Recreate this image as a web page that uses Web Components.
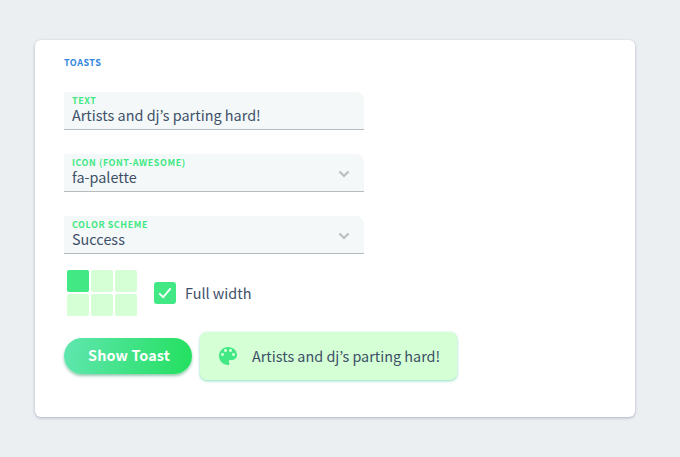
<!DOCTYPE html>
<html lang="en">
<head>
<meta charset="utf-8">
<title>Toasts</title>
<style>
body { margin: 0; height: 457px; overflow: hidden; background: #ebeff2; color: #3d5068; font: 14.4px/22px "Noto Sans CJK KR", "Noto Sans", sans-serif; }
.fields { display: flex; flex-direction: column; gap: 24px; margin-top: 23px; }
.options { display: flex; align-items: center; margin: 16px 0 0 3px; gap: 17px; }
.actions { display: flex; align-items: center; gap: 8px; margin-top: 16px; }
</style>
</head>
<body>
<ui-card heading="Toasts">
  <div class="fields">
    <ui-field label="Text">Artists and dj’s parting hard!</ui-field>
    <ui-field label="Icon (font-awesome)" select>fa-palette</ui-field>
    <ui-field label="Color scheme" select>Success</ui-field>
  </div>
  <div class="options">
    <ui-position></ui-position>
    <ui-checkbox>Full width</ui-checkbox>
  </div>
  <div class="actions">
    <ui-button>Show Toast</ui-button>
    <ui-toast>Artists and dj’s parting hard!</ui-toast>
  </div>
</ui-card>
<script>
const define = (name, markup, setup) => customElements.define(name, class extends HTMLElement {
  constructor() {
    super();
    this.attachShadow({ mode: 'open' }).innerHTML = markup;
  }
  connectedCallback() { if (setup) setup(this, this.shadowRoot); }
});

define('ui-card', `<style>
:host { display: block; box-sizing: border-box; width: 600px; height: 377px; margin: 40px 0 0 35px; padding: 17px 29px; background: #fff; border-radius: 6px; box-shadow: 0 1px 3px rgba(60,60,100,.34); }
h2 { margin: 0; font-size: 9px; line-height: 12px; font-weight: 700; letter-spacing: .5px; text-transform: uppercase; color: #2e86de; }
</style><h2></h2><slot></slot>`, (el, root) => {
  root.querySelector('h2').textContent = el.getAttribute('heading');
});

define('ui-field', `<style>
:host { display: flex; box-sizing: border-box; width: 300px; height: 38px; padding: 3px 10px 0 8px; background: #f4f8f9; border-bottom: 1px solid #b5bbbf; border-radius: 0 8px 0 0; justify-content: space-between; }
.label { font-size: 9px; line-height: 11px; font-weight: 700; letter-spacing: .54px; text-transform: uppercase; color: #41e883; }
.value { white-space: nowrap; line-height: 18px; letter-spacing: .02px; }
svg { display: none; width: 20px; height: 20px; margin-top: 7px; fill: none; stroke: #b9bfc2; stroke-width: 2.7; }
:host([select]) svg { display: block; }
</style><div><div class="label"></div><div class="value"><slot></slot></div></div>
<svg viewBox="0 0 24 24"><path d="M6.6 9 12 14.4 17.4 9"/></svg>`, (el, root) => {
  root.querySelector('.label').textContent = el.getAttribute('label');
});

define('ui-position', `<style>
:host { display: grid; grid-template: 22px 22px / 22px 22px 22px; gap: 2px; }
i { background: #d5ffd5; border-radius: 2px; }
i:first-of-type { background: #41e883; }
</style><i></i><i></i><i></i><i></i><i></i><i></i>`);

define('ui-checkbox', `<style>
:host { display: flex; align-items: center; gap: 9px; white-space: nowrap; }
svg { display: block; width: 22px; height: 22px; border-radius: 3px; background: #41e883; }
</style><svg viewBox="0 0 22 22"><path d="M5.7 11.8 9.2 15.1 16.2 6.9" fill="none" stroke="#fff" stroke-width="1.8" stroke-linecap="round"/></svg><span><slot></slot></span>`);

define('ui-button', `<style>
:host { display: block; width: 128px; height: 36px; }
button { width: 100%; height: 100%; padding: 0 0 2px 2px; border: 0; border-radius: 18px; background: linear-gradient(100deg, #60e6b0, #22e05e); box-shadow: 0 2px 3px rgba(40,150,100,.5); color: #fff; font: inherit; font-weight: 700; letter-spacing: .12px; white-space: nowrap; }
</style><button><slot></slot></button>`);

define('ui-toast', `<style>
:host { display: flex; box-sizing: border-box; align-items: center; width: 257px; height: 48px; padding-left: 16px; gap: 12px; border-radius: 7px; background: #d5ffd5; box-shadow: 0 1px 3px rgba(40,190,140,.55); white-space: nowrap; }
svg { width: 24px; height: 24px; fill: #41e883; }
</style><svg viewBox="0 0 24 24"><path d="M12 3c-4.97 0-9 4.03-9 9s4.03 9 9 9c.83 0 1.5-.67 1.5-1.5 0-.39-.15-.74-.39-1.01-.23-.26-.38-.61-.38-.99 0-.83.67-1.5 1.5-1.5H16c2.76 0 5-2.24 5-5 0-4.42-4.03-8-9-8zm-5.5 9c-.83 0-1.5-.67-1.5-1.5S5.67 9 6.5 9 8 9.67 8 10.5 7.33 12 6.5 12zm3-4C8.67 8 8 7.33 8 6.5S8.67 5 9.5 5s1.5.67 1.5 1.5S10.33 8 9.5 8zm5 0c-.83 0-1.5-.67-1.5-1.5S13.67 5 14.5 5s1.5.67 1.5 1.5S15.33 8 14.5 8zm3 4c-.83 0-1.5-.67-1.5-1.5S16.67 9 17.5 9s1.5.67 1.5 1.5-.67 1.5-1.5 1.5z"/></svg><span><slot></slot></span>`);
</script>
</body>
</html>
